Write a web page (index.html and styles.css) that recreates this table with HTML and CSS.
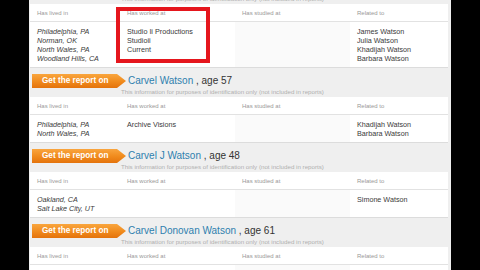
FILE: index.html
```html
<!DOCTYPE html>
<html>
<head>
<meta charset="utf-8">
<link rel="stylesheet" href="styles.css">
</head>
<body>
<div class="page">
  <div class="record first">
    <div class="band">
      <div class="bandrow">
        <span class="btn">Get the report on</span>
        <span class="name"><a>Carvel Watson</a> , age 33</span>
      </div>
      <div class="info">This information for purposes of identification only (not included in reports)</div>
    </div>
    <div class="panel">
      <div class="hd">Has lived in</div>
      <div class="hd">Has worked at</div>
      <div class="hd">Has studied at</div>
      <div class="hd">Related to</div>
      <div class="cell lived">Philadelphia, PA<br>Norman, OK<br>North Wales, PA<br>Woodland Hills, CA</div>
      <div class="cell">Studio Ii Productions<br>Studioii<br>Current</div>
      <div class="cell studied"></div>
      <div class="cell">James Watson<br>Julia Watson<br>Khadijah Watson<br>Barbara Watson</div>
    </div>
  </div>

  <div class="record">
    <div class="band">
      <div class="bandrow">
        <span class="btn">Get the report on</span>
        <span class="name"><a>Carvel Watson</a> , age 57</span>
      </div>
      <div class="info">This information for purposes of identification only (not included in reports)</div>
    </div>
    <div class="panel">
      <div class="hd">Has lived in</div>
      <div class="hd">Has worked at</div>
      <div class="hd">Has studied at</div>
      <div class="hd">Related to</div>
      <div class="cell lived">Philadelphia, PA<br>North Wales, PA</div>
      <div class="cell">Archive Visions</div>
      <div class="cell studied"></div>
      <div class="cell">Khadijah Watson<br>Barbara Watson</div>
    </div>
  </div>

  <div class="record">
    <div class="band">
      <div class="bandrow">
        <span class="btn">Get the report on</span>
        <span class="name"><a>Carvel J Watson</a> , age 48</span>
      </div>
      <div class="info">This information for purposes of identification only (not included in reports)</div>
    </div>
    <div class="panel">
      <div class="hd">Has lived in</div>
      <div class="hd">Has worked at</div>
      <div class="hd">Has studied at</div>
      <div class="hd">Related to</div>
      <div class="cell lived">Oakland, CA<br>Salt Lake City, UT</div>
      <div class="cell"></div>
      <div class="cell studied"></div>
      <div class="cell">Simone Watson</div>
    </div>
  </div>

  <div class="record">
    <div class="band">
      <div class="bandrow">
        <span class="btn">Get the report on</span>
        <span class="name"><a>Carvel Donovan Watson</a> , age 61</span>
      </div>
      <div class="info">This information for purposes of identification only (not included in reports)</div>
    </div>
    <div class="panel">
      <div class="hd">Has lived in</div>
      <div class="hd">Has worked at</div>
      <div class="hd">Has studied at</div>
      <div class="hd">Related to</div>
      <div class="cell lived">&nbsp;</div>
      <div class="cell"></div>
      <div class="cell studied"></div>
      <div class="cell"></div>
    </div>
  </div>

  <div class="highlight"></div>
</div>
</body>
</html>
```

FILE: styles.css
```css
html, body {
  margin: 0;
  padding: 0;
  background: #000;
  height: 100%;
  overflow: hidden;
}

.page {
  position: relative;
  width: 422px;
  height: 270px;
  margin-left: 29px;
  background: #efefef;
  overflow: hidden;
  font-family: "Liberation Sans", Arial, sans-serif;
  padding: 0 3px 0 1px;
  box-sizing: border-box;
}

.record.first {
  margin-top: -25px;
}

.band {
  padding: 6px 0 1px;
  height: 29px;
  box-sizing: border-box;
}

.bandrow {
  display: flex;
  align-items: center;
  height: 14px;
  padding-left: 2px;
}

.btn {
  width: 94px;
  height: 14px;
  box-sizing: border-box;
  padding-left: 10px;
  color: #fff;
  font-weight: bold;
  font-size: 8.2px;
  line-height: 14px;
  background: linear-gradient(#f9a53e, #f08a1c 55%, #e4730c);
  clip-path: polygon(0 0, calc(100% - 9px) 0, 100% 50%, calc(100% - 9px) 100%, 0 100%);
  white-space: nowrap;
}

.name {
  margin-left: 2px;
  font-size: 10px;
  line-height: 14px;
  color: #333;
  white-space: nowrap;
}

.name a {
  color: #2e80ae;
}

.info {
  margin-left: 91px;
  font-size: 6.2px;
  line-height: 8px;
  color: #b0b0b0;
  white-space: nowrap;
}

.panel {
  display: grid;
  grid-template-columns: 90px 115px 115px 1fr;
  background: #fff;
}

.hd {
  padding: 5px 0 4px 7px;
  font-size: 6px;
  line-height: 8px;
  height: 8px;
  color: #999;
  border-bottom: 1px solid #e2e2e2;
  white-space: nowrap;
}

.cell {
  padding: 5px 0 4px 7px;
  font-size: 7.2px;
  line-height: 9px;
  color: #3a3a3a;
  border-bottom: 1px solid #dcdcdc;
  white-space: nowrap;
}

.cell.lived {
  font-style: italic;
}

.cell.studied {
  background: #fafafa;
}

.highlight {
  position: absolute;
  left: 87px;
  top: 7px;
  width: 94px;
  height: 56px;
  box-sizing: border-box;
  border: 4px solid #e5161d;
}
```
